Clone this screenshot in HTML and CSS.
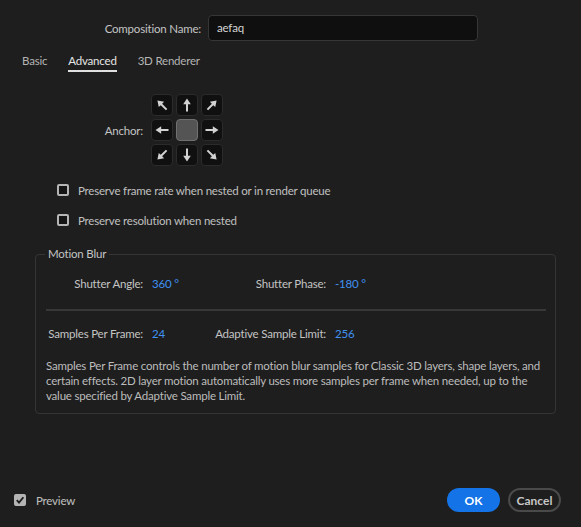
FILE: index.html
```html
<!DOCTYPE html>
<html lang="en">
<head>
<meta charset="utf-8">
<title>Composition Settings</title>
<link rel="stylesheet" href="styles.css">
</head>
<body>
<svg class="defs" width="0" height="0" aria-hidden="true">
  <defs>
    <symbol id="arrow" viewBox="0 0 22 22">
      <path d="M11 4.5 L14.8 10.2 L12 10.2 L12 17.5 L10 17.5 L10 10.2 L7.2 10.2 Z" fill="#d2d2d2"/>
    </symbol>
  </defs>
</svg>
<div class="dialog">
  <div class="name-row">
    <span class="name-label">Composition Name:</span>
    <div class="name-input">aefaq</div>
  </div>

  <nav class="tabs">
    <span class="tab">Basic</span>
    <span class="tab active">Advanced</span>
    <span class="tab">3D Renderer</span>
  </nav>

  <div class="anchor-row">
    <span class="anchor-label">Anchor:</span>
    <div class="anchor-grid">
      <div class="cell"><svg width="22" height="22"><use href="#arrow" transform="rotate(-45 11 11)"/></svg></div>
      <div class="cell"><svg width="22" height="22"><use href="#arrow"/></svg></div>
      <div class="cell"><svg width="22" height="22"><use href="#arrow" transform="rotate(45 11 11)"/></svg></div>
      <div class="cell"><svg width="22" height="22"><use href="#arrow" transform="rotate(-90 11 11)"/></svg></div>
      <div class="cell center"></div>
      <div class="cell"><svg width="22" height="22"><use href="#arrow" transform="rotate(90 11 11)"/></svg></div>
      <div class="cell"><svg width="22" height="22"><use href="#arrow" transform="rotate(-135 11 11)"/></svg></div>
      <div class="cell"><svg width="22" height="22"><use href="#arrow" transform="rotate(180 11 11)"/></svg></div>
      <div class="cell"><svg width="22" height="22"><use href="#arrow" transform="rotate(135 11 11)"/></svg></div>
    </div>
  </div>

  <div class="options">
    <div class="check"><span class="box"></span><span>Preserve frame rate when nested or in render queue</span></div>
    <div class="check"><span class="box"></span><span>Preserve resolution when nested</span></div>
  </div>

  <fieldset class="blur">
    <legend>Motion Blur</legend>
    <div class="param-row">
      <span class="plabel">Shutter Angle:</span>
      <span class="pvalue">360 °</span>
      <span class="plabel">Shutter Phase:</span>
      <span class="pvalue">-180 °</span>
    </div>
    <div class="divider"></div>
    <div class="param-row">
      <span class="plabel">Samples Per Frame:</span>
      <span class="pvalue">24</span>
      <span class="plabel">Adaptive Sample Limit:</span>
      <span class="pvalue">256</span>
    </div>
    <p class="note">Samples Per Frame controls the number of motion blur samples for Classic 3D layers, shape layers, and certain effects. 2D layer motion automatically uses more samples per frame when needed, up to the value specified by Adaptive Sample Limit.</p>
  </fieldset>

  <footer class="footer">
    <div class="check preview"><span class="box checked"><svg width="12" height="12" viewBox="0 0 12 12"><path d="M2.8 6.2 L5 8.6 L9.4 3.2" fill="none" stroke="#1b1b1b" stroke-width="1.8"/></svg></span><span>Preview</span></div>
    <div class="buttons">
      <button class="btn ok">OK</button>
      <button class="btn cancel">Cancel</button>
    </div>
  </footer>
</div>
</body>
</html>
```

FILE: styles.css
```css
* { box-sizing: border-box; }
html, body { margin: 0; padding: 0; background: #1e1e1e; }
body {
  font-family: Lato, "Liberation Sans", sans-serif;
  font-size: 11.5px;
  letter-spacing: -0.2px;
  color: #b9b9b9;
}
.defs { position: absolute; width: 0; height: 0; }
.dialog {
  height: 527px;
  display: flex;
  flex-direction: column;
  padding-top: 15px;
}
.name-row {
  display: flex;
  align-items: center;
  height: 26px;
}
.name-label {
  width: 201px;
  text-align: right;
  color: #c4c4c4;
}
.name-input {
  margin-left: 7px;
  width: 270px;
  height: 26px;
  background: #0f0f0f;
  border: 1px solid #363636;
  border-radius: 4px;
  padding: 0 8px;
  line-height: 24px;
  color: #d4d4d4;
}
.tabs {
  display: flex;
  gap: 21px;
  margin-top: 12px;
  padding-left: 22px;
  height: 19px;
}
.tab {
  line-height: 16px;
  color: #b4b4b4;
}
.tab.active {
  color: #e6e6e6;
  border-bottom: 2px solid #e0e0e0;
  padding-bottom: 1px;
}
.anchor-row {
  display: flex;
  align-items: center;
  margin-top: 22px;
}
.anchor-label {
  width: 143px;
  text-align: right;
  color: #c4c4c4;
}
.anchor-grid {
  margin-left: 8px;
  display: grid;
  grid-template-columns: repeat(3, 22px);
  grid-auto-rows: 22px;
  gap: 3px;
}
.cell {
  background: #101010;
  border: 1px solid #2b2b2b;
  border-radius: 4px;
  display: flex;
  align-items: center;
  justify-content: center;
}
.cell svg { display: block; flex: none; }
.cell.center {
  background: #545454;
  border: 1px solid #707070;
}
.options {
  margin-top: 16px;
  padding-left: 57px;
  display: flex;
  flex-direction: column;
  gap: 14px;
}
.check {
  display: flex;
  align-items: center;
  height: 16px;
  gap: 9px;
  color: #c0c0c0;
}
.box {
  width: 12px;
  height: 12px;
  border: 2px solid #b4b4b4;
  border-radius: 2px;
  background: #141414;
  flex: none;
}
.box.checked {
  background: #b4b4b4;
  border: none;
  display: flex;
}
.blur {
  margin: 18px 25px 0 35px;
  border: 1px solid #353535;
  border-radius: 4px;
  padding: 14px 9px 10px 10px;
}
.blur legend {
  padding: 0 3px;
  margin-left: -1px;
  line-height: 16px;
  color: #c4c4c4;
}
.param-row {
  display: grid;
  grid-template-columns: 97px 70px 113px auto;
  line-height: 16px;
  white-space: nowrap;
}
.plabel {
  text-align: right;
  color: #c4c4c4;
}
.pvalue {
  padding-left: 9px;
  color: #3f91f2;
}
.divider {
  height: 2px;
  background: #383838;
  margin: 17px 0 15px;
}
.note {
  margin: 16px 0 0;
  line-height: 15px;
  color: #bcbcbc;
}
.footer {
  margin-top: auto;
  display: flex;
  align-items: center;
  justify-content: space-between;
  padding: 0 20px 15px 14px;
}
.preview { gap: 10px; }
.buttons {
  display: flex;
  gap: 8px;
}
.btn {
  height: 24px;
  border-radius: 12px;
  font-family: inherit;
  font-size: 12px;
  font-weight: 700;
  letter-spacing: 0;
  padding: 0;
  cursor: pointer;
}
.ok {
  width: 53px;
  background: #1473e6;
  border: none;
  color: #ffffff;
}
.cancel {
  width: 53px;
  background: transparent;
  border: 2px solid #4a4a4a;
  color: #c8c8c8;
}
```
